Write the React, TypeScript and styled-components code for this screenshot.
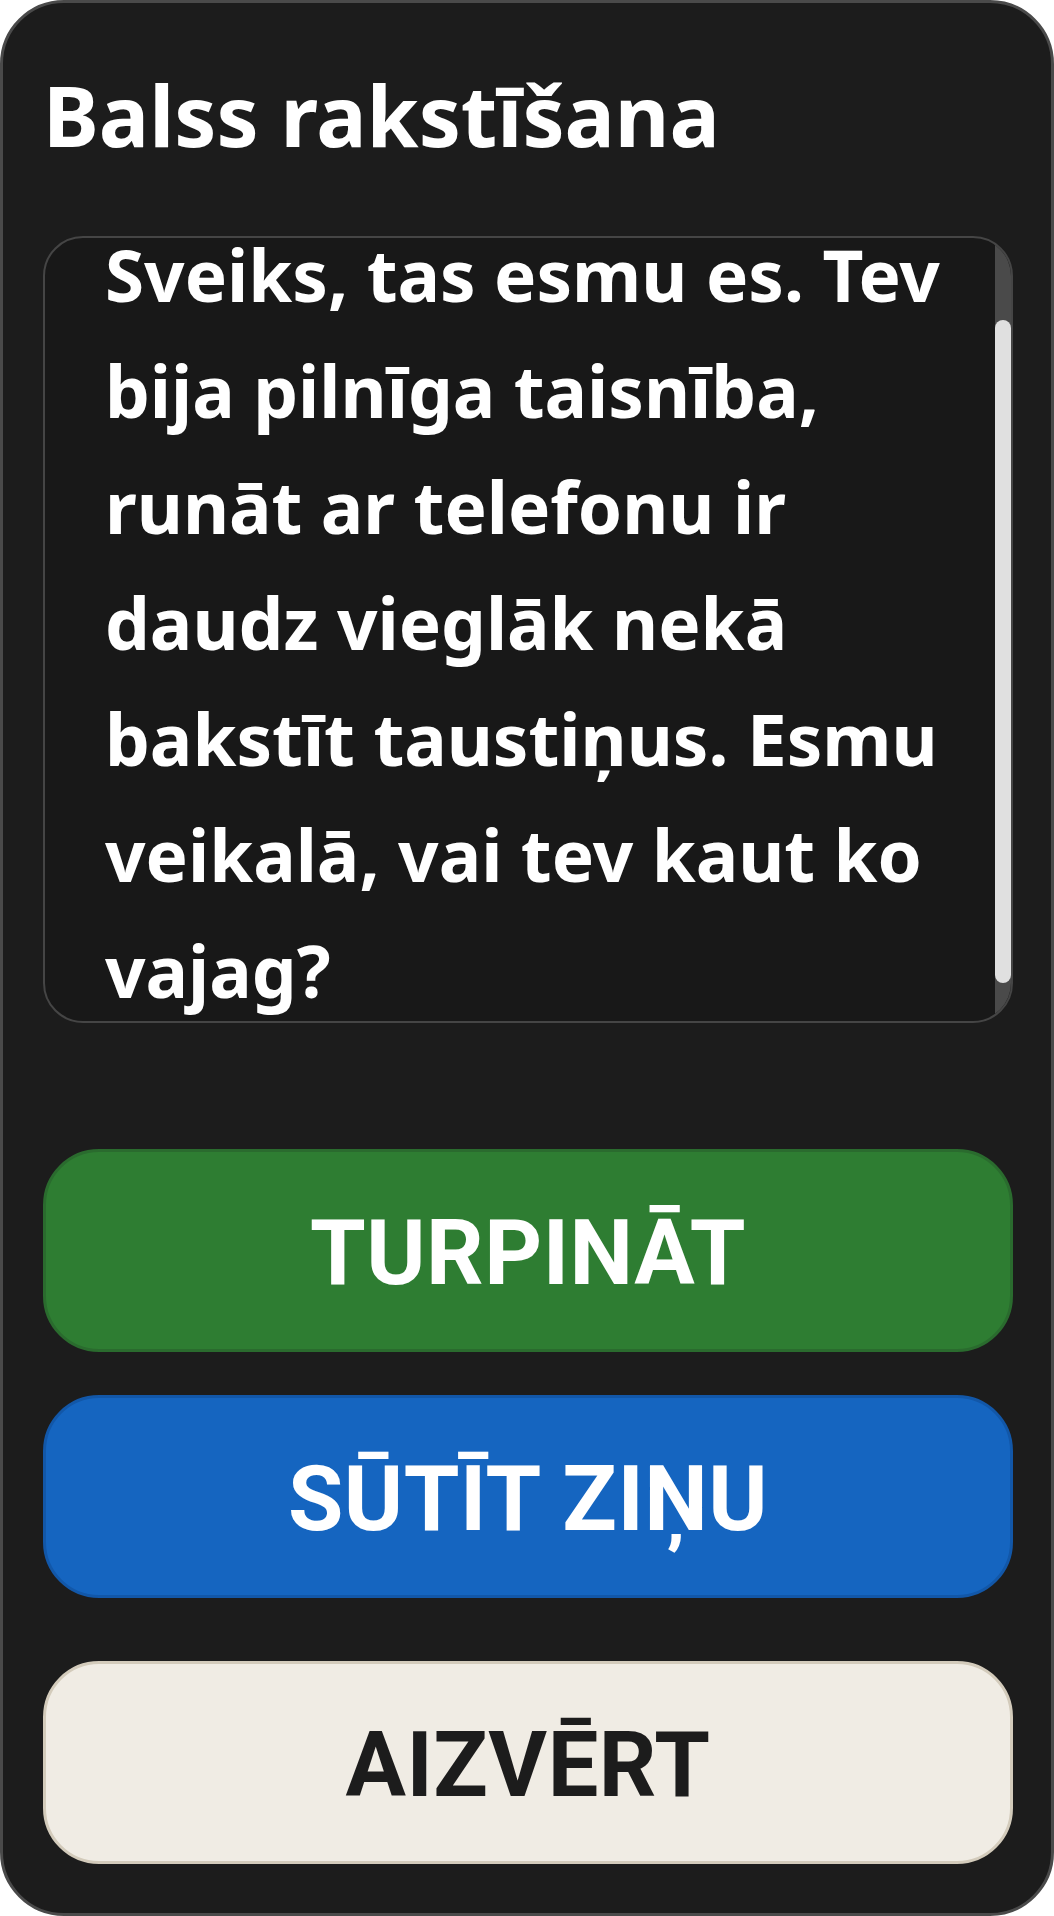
import React, { useLayoutEffect, useRef, useState } from "react";
import styled, { createGlobalStyle } from "styled-components";

const GlobalStyle = createGlobalStyle`
  html, body {
    margin: 0;
    padding: 0;
    background: #ffffff;
  }
  * { box-sizing: border-box; }
`;

const Card = styled.div`
  width: 1054px;
  height: 1916px;
  background: #1c1c1c;
  border: 3px solid #4a4a4a;
  border-radius: 64px;
  padding: 55px 38px 50px 40px;
  display: flex;
  flex-direction: column;
  font-family: "Noto Sans", "Liberation Sans", sans-serif;
`;

const Title = styled.h1`
  margin: 0;
  font-family: "Noto Sans", sans-serif;
  font-weight: 700;
  font-size: 84px;
  line-height: 114px;
  color: #ffffff;
`;

const TranscriptFrame = styled.div`
  position: relative;
  margin-top: 64px;
  height: 787px;
  flex: none;
  background: #181818;
  border: 2px solid #454545;
  border-radius: 40px;
  overflow: hidden;
`;

const Scroller = styled.div`
  height: 100%;
  overflow-y: scroll;
  scrollbar-width: none;
  padding: 76px 46px 37px 60px;
  font-family: "Noto Sans", sans-serif;
  font-weight: 700;
  font-size: 71px;
  line-height: 116px;
  color: #ffffff;

  &::-webkit-scrollbar {
    display: none;
  }
`;

const Track = styled.div`
  position: absolute;
  top: 0;
  right: 0;
  bottom: 0;
  width: 16px;
  background: #4a4a4a;
`;

const Thumb = styled.div`
  position: absolute;
  left: 0;
  width: 16px;
  background: #e0e0e0;
  border-radius: 8px;
`;

const Actions = styled.div`
  margin-top: 126px;
  display: flex;
  flex-direction: column;
`;

type Tone = "green" | "blue" | "cream";

const tones: Record<Tone, { bg: string; border: string; fg: string; gap: number }> = {
  green: { bg: "#2e7d32", border: "#2a6b2e", fg: "#ffffff", gap: 0 },
  blue: { bg: "#1565c0", border: "#1257a8", fg: "#ffffff", gap: 43 },
  cream: { bg: "#f0ece4", border: "#d3cbbb", fg: "#1c1c1c", gap: 63 },
};

const ActionButton = styled.button<{ $tone: Tone }>`
  margin-top: ${(p) => tones[p.$tone].gap}px;
  height: 203px;
  width: 100%;
  border-radius: 56px;
  border: 3px solid ${(p) => tones[p.$tone].border};
  background: ${(p) => tones[p.$tone].bg};
  color: ${(p) => tones[p.$tone].fg};
  font-family: Roboto, "Liberation Sans", sans-serif;
  font-weight: 700;
  font-size: 90px;
  letter-spacing: 0.5px;
  display: flex;
  align-items: center;
  justify-content: center;
  padding: 6px 0 0 0;
  cursor: pointer;
`;

const TEXT =
  "Sveiks, tas esmu es. Tev bija pilnīga taisnība, runāt ar telefonu ir daudz vieglāk nekā bakstīt taustiņus. Esmu veikalā, vai tev kaut ko vajag?";

export default function App() {
  const ref = useRef<HTMLDivElement>(null);
  const [thumb, setThumb] = useState({ top: 82, height: 663 });

  useLayoutEffect(() => {
    const el = ref.current;
    if (!el) return;
    el.scrollTop = 97;
    const client = el.clientHeight;
    const total = el.scrollHeight;
    const max = Math.max(1, total - client);
    const height = Math.max(40, (client * client) / total);
    const top = (el.scrollTop / max) * (client - height);
    setThumb({ top, height });
  }, []);

  return (
    <>
      <GlobalStyle />
      <Card>
        <Title>Balss rakstīšana</Title>
        <TranscriptFrame>
          <Scroller ref={ref}>{TEXT}</Scroller>
          <Track>
            <Thumb style={{ top: thumb.top, height: thumb.height }} />
          </Track>
        </TranscriptFrame>
        <Actions>
          <ActionButton $tone="green">TURPINĀT</ActionButton>
          <ActionButton $tone="blue">SŪTĪT ZIŅU</ActionButton>
          <ActionButton $tone="cream">AIZVĒRT</ActionButton>
        </Actions>
      </Card>
    </>
  );
}
